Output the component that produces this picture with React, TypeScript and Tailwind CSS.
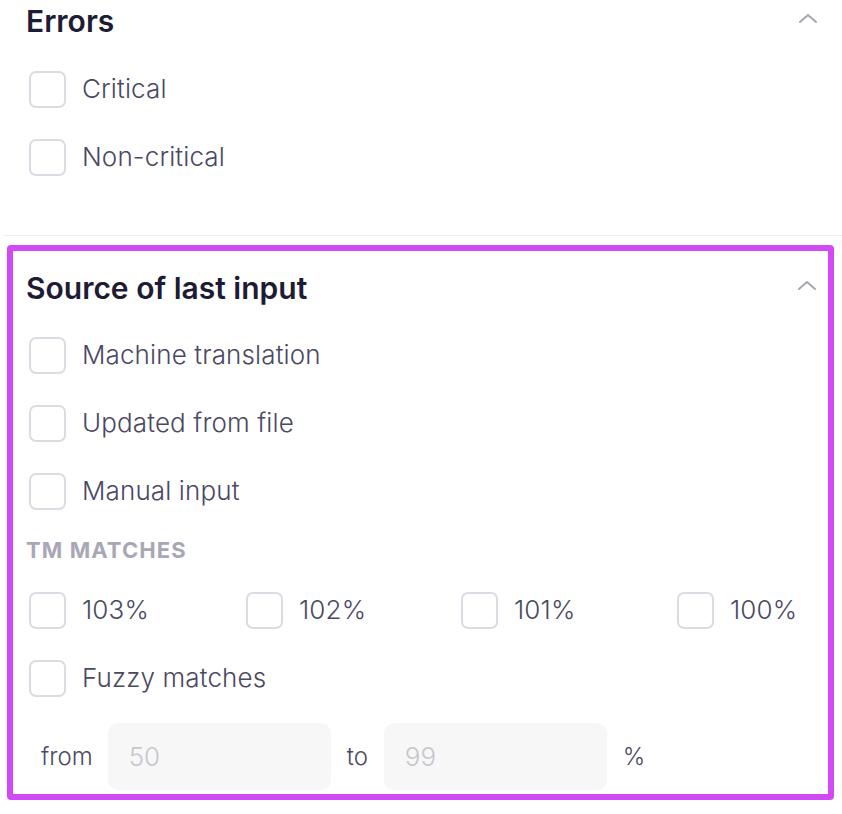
import React from "react";

function Chevron() {
  return (
    <svg width="20" height="12" viewBox="0 0 20 12" fill="none" className="text-[#a7a5b4]">
      <path d="M2 10 L10 3 L18 10" stroke="currentColor" strokeWidth="2" strokeLinecap="round" strokeLinejoin="round" />
    </svg>
  );
}

function Check({ label }: { label: string }) {
  return (
    <label className="flex h-[68px] items-center gap-[16px] pl-[3px]">
      <span className="block h-[37px] w-[37px] shrink-0 rounded-[7px] border-2 border-[#dcdbe4] bg-white" />
      <span className="text-[26px] font-light leading-none tracking-[0.005em] text-[#4a4862]">{label}</span>
    </label>
  );
}

function Header({ title }: { title: string }) {
  return (
    <div className="flex h-[40px] items-center justify-between">
      <h2 className="text-[30px] font-semibold leading-[40px] text-[#1e1b34]">{title}</h2>
      <div className="mr-[-2px] mt-[-6px]">
        <Chevron />
      </div>
    </div>
  );
}

export default function App() {
  return (
    <div className="min-h-[814px] w-[842px] bg-white" style={{ fontFamily: "Inter, 'Noto Sans', sans-serif" }}>
      <section className="px-[26px] pb-[44px] pt-[1px]">
        <Header title="Errors" />
        <div className="mt-[14px]">
          <Check label="Critical" />
          <Check label="Non-critical" />
        </div>
      </section>

      <div className="ml-[3px] h-px bg-[#efeff1]" />

      <section className="ml-[7px] mt-[9px] w-[827px] rounded-[4px] border-[6px] border-[#d24af5] px-[13px] pb-[4px] pt-[17px]">
        <Header title="Source of last input" />
        <div className="mt-[13px]">
          <Check label="Machine translation" />
          <Check label="Updated from file" />
          <Check label="Manual input" />
        </div>
        <div className="mt-[11px] h-[28px] text-[22px] font-bold uppercase leading-[28px] tracking-[0.05em] text-[#a9a7b5]">
          TM matches
        </div>
        <div className="mt-[12px] grid grid-cols-[217px_215px_216px_auto]">
          <Check label="103%" />
          <Check label="102%" />
          <Check label="101%" />
          <Check label="100%" />
        </div>
        <Check label="Fuzzy matches" />
        <div className="mt-[11px] flex items-center gap-[15px] pl-[15px] text-[24px] font-light text-[#4a4862]">
          <span>from</span>
          <input
            placeholder="50"
            className="h-[67px] w-[223px] rounded-[10px] bg-[#f7f7f8] px-[21px] text-[26px] font-light outline-none placeholder:text-[#c8c6cf]"
          />
          <span className="px-px">to</span>
          <input
            placeholder="99"
            className="h-[67px] w-[223px] rounded-[10px] bg-[#f7f7f8] px-[21px] text-[26px] font-light outline-none placeholder:text-[#c8c6cf]"
          />
          <span className="pl-px">%</span>
        </div>
      </section>
    </div>
  );
}
